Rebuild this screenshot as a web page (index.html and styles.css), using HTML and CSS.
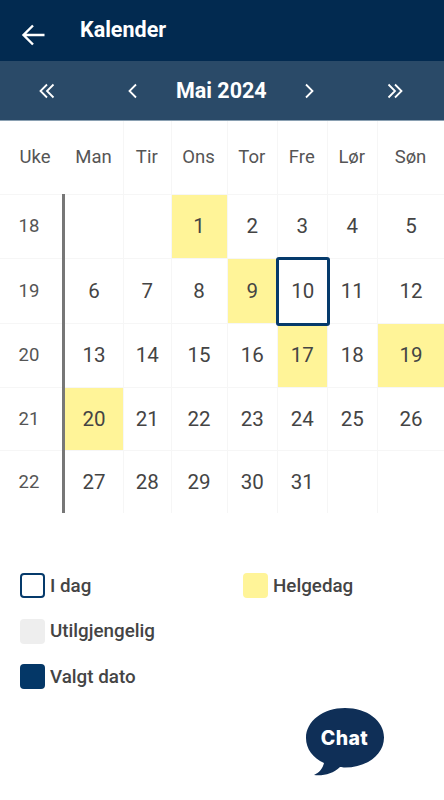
FILE: index.html
```html
<!DOCTYPE html>
<html lang="no">
<head>
<meta charset="utf-8">
<title>Kalender</title>
<link rel="stylesheet" href="styles.css">
</head>
<body>
<header class="appbar">
  <svg class="back" width="26" height="24" viewBox="0 0 26 24"><path d="M23.5 12H3M12 2.5 2.5 12l9.500 9.500" fill="none" stroke="#fff" stroke-width="2.400"/></svg>
  <h1 class="title">Kalender</h1>
</header>
<nav class="monthbar">
  <svg class="nav" width="16" height="16" viewBox="0 0 16 16"><path d="M8 1.500 1.500 8 8 14.500M14.500 1.500 8 8l6.500 6.500" fill="none" stroke="#fff" stroke-width="1.800"/></svg>
  <svg class="nav nav-l" width="10" height="16" viewBox="0 0 10 16"><path d="M8 1.500 1.500 8 8 14.500" fill="none" stroke="#fff" stroke-width="1.800"/></svg>
  <span class="month">Mai 2024</span>
  <svg class="nav nav-r" width="10" height="16" viewBox="0 0 10 16"><path d="M2 1.500 8.500 8 2 14.500" fill="none" stroke="#fff" stroke-width="1.800"/></svg>
  <svg class="nav nav-dr" width="16" height="16" viewBox="0 0 16 16"><path d="M1.500 1.500 8 8l-6.500 6.500M8 1.500 14.500 8 8 14.500" fill="none" stroke="#fff" stroke-width="1.800"/></svg>
</nav>
<main class="cal">
  <div class="head wk">Uke</div><div class="head">Man</div><div class="head">Tir</div><div class="head">Ons</div><div class="head">Tor</div><div class="head">Fre</div><div class="head">Lør</div><div class="head">Søn</div>

  <div class="wk">18</div><div class="day"></div><div class="day"></div><div class="day hol">1</div><div class="day">2</div><div class="day">3</div><div class="day">4</div><div class="day">5</div>
  <div class="wk">19</div><div class="day">6</div><div class="day">7</div><div class="day">8</div><div class="day hol">9</div><div class="day today">10</div><div class="day">11</div><div class="day">12</div>
  <div class="wk">20</div><div class="day">13</div><div class="day">14</div><div class="day">15</div><div class="day">16</div><div class="day hol">17</div><div class="day">18</div><div class="day hol">19</div>
  <div class="wk">21</div><div class="day hol">20</div><div class="day">21</div><div class="day">22</div><div class="day">23</div><div class="day">24</div><div class="day">25</div><div class="day">26</div>
  <div class="wk">22</div><div class="day">27</div><div class="day">28</div><div class="day">29</div><div class="day">30</div><div class="day">31</div><div class="day"></div><div class="day"></div>
</main>
<section class="legend">
  <div class="item"><span class="swatch s-today"></span>I dag</div>
  <div class="item"><span class="swatch s-hol"></span>Helgedag</div>
  <div class="item"><span class="swatch s-off"></span>Utilgjengelig</div>
  <div class="item empty"></div>
  <div class="item"><span class="swatch s-sel"></span>Valgt dato</div>
</section>
<button class="chat">
  <svg width="80" height="70" viewBox="0 0 80 70"><path d="M40 1C18 1 1 14 1 31c0 11 7 20 18 25-1 5-5 10-10 12 9 1 19-1 26-8 2 0 3 .500 5 .500 22 0 39-13 39-30S62 1 40 1Z" fill="#0f2f57"/></svg>
  <span class="chat-label">Chat</span>
</button>
</body>
</html>
```
FILE: styles.css
```css
* { box-sizing: border-box; }
html, body { margin: 0; padding: 0; }
body {
  width: 444px;
  height: 800px;
  overflow: hidden;
  background: #fff;
  font-family: Roboto, "Liberation Sans", sans-serif;
  color: #444;
  position: relative;
}
.appbar {
  height: 61px;
  background: #022a50;
  display: flex;
  align-items: flex-start;
  padding: 23px 0 0 21px;
}
.back { flex: none; }
.title {
  margin: -7px 0 0 33px;
  font-size: 21.500px;
  line-height: 28px;
  font-weight: 700;
  color: #fff;
}
.monthbar {
  height: 60px;
  background: #2a4a68;
  border-bottom: 1px solid #8aa0b2;
  display: flex;
  align-items: center;
  padding-left: 39px;
}
.nav { flex: none; }
.nav-l { margin-left: 73px; }
.month { margin: 0 37px 0 38px; width: 91px; white-space: nowrap; color: #fff; font-size: 21.500px; font-weight: 700; }
.nav-dr { margin-left: 73px; }
.cal {
  position: relative;
  display: grid;
  grid-template-columns: 65px 59px 47.500px 56px 50.500px 49.500px 50.500px 66px;
  grid-template-rows: 73.500px 64.500px 64.500px 64.500px 62.500px 62.500px;
  font-size: 20.500px;
}
.cal::after {
  content: "";
  position: absolute;
  left: 62px;
  top: 73px;
  bottom: 0;
  width: 3px;
  background: #777;
}
.cal > div {
  display: flex;
  align-items: center;
  justify-content: center;
  border-right: 1px solid #f6f6f6;
  border-bottom: 1px solid #f6f6f6;
}
.cal > div:nth-child(8n) { border-right: 0; }
.cal > div:nth-last-child(-n+8) { border-bottom: 0; }
.cal > .head { font-size: 18.500px; color: #555; padding-right: 1px; }
.cal > .wk { font-size: 18.500px; color: #555; border-right: 0; padding-right: 7px; }
.cal > .head.wk { padding: 0 0 0 5px; }
.cal > .day { position: relative; }
.cal > .hol { background: #fff498; }
.cal > .today {
  margin: -2px;
  border: 3px solid #053a6b;
  border-radius: 3px;
  background: #fff;
  z-index: 1;
}
.legend {
  display: grid;
  grid-template-columns: 223px 1fr;
  grid-auto-rows: 45.500px;
  padding: 60px 0 0 20px;
  font-size: 18.800px;
  font-weight: 500;
  color: #444;
}
.item { display: flex; align-items: center; gap: 5px; height: 24px; line-height: 28px; padding-top: 1px; }
.swatch { width: 25px; height: 25px; border-radius: 4px; flex: none; }
.s-today { border: 2.500px solid #053a6b; }
.s-hol { background: #fff498; }
.s-off { background: #eee; }
.s-sel { background: #043767; }
.chat {
  position: absolute;
  left: 305px;
  top: 707px;
  width: 80px;
  height: 70px;
  padding: 0;
  border: 0;
  background: none;
}
.chat svg { display: block; }
.chat-label {
  position: absolute;
  left: 0;
  right: 1px;
  top: 17.500px;
  text-align: center;
  color: #fff;
  font: 800 19.500px/26px Inter, Roboto, sans-serif;
  letter-spacing: .4px;
}
```
